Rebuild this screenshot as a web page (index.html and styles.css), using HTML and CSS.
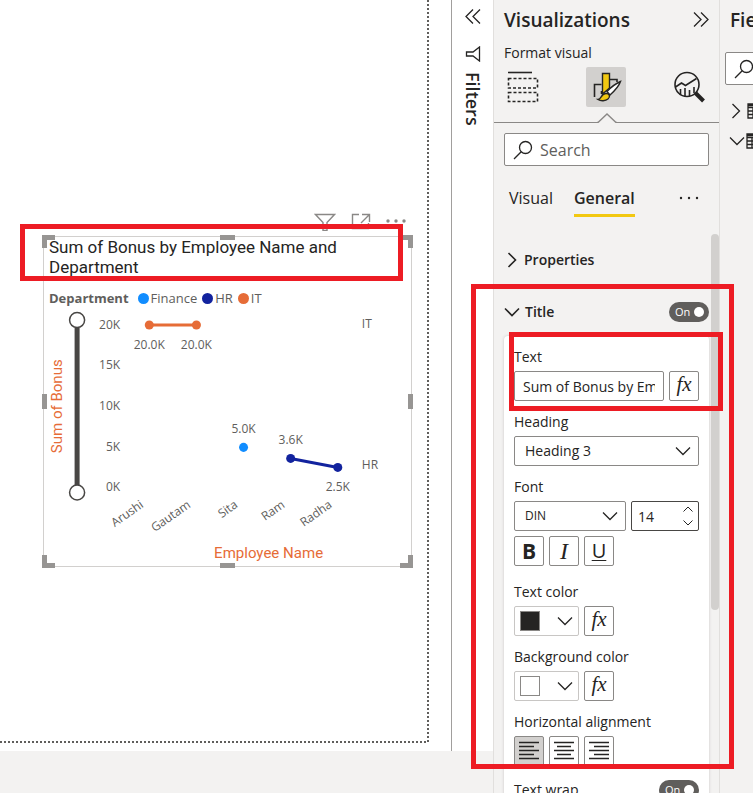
FILE: index.html
```html
<!DOCTYPE html>
<html lang="en">
<head>
<meta charset="utf-8">
<meta name="viewport" content="width=device-width, initial-scale=1">
<title>Report – Format visual</title>
<link rel="stylesheet" href="styles.css">
</head>
<body>
<svg class="defs" aria-hidden="true">
  <symbol id="chev-down" viewBox="0 0 16 10"><path d="M1 1.500 8 8.500 15 1.500"/></symbol>
  <symbol id="chev-right" viewBox="0 0 10 16"><path d="M1.500 1 8.500 8 1.500 15"/></symbol>
  <symbol id="search" viewBox="0 0 20 20"><circle cx="12.500" cy="7.500" r="6"/><path d="M8.200 11.800 1 19"/></symbol>
  <symbol id="grid" viewBox="0 0 18 16"><path d="M1 1h16v14H1zM1 4.500h16M1 8h16M1 11.500h16M6 4v11M12 4v11M1 2.500h16"/></symbol>
</svg>
<div class="app">
  <main class="report">
    <div class="page">
      <section class="visual" aria-label="Sum of Bonus by Employee Name and Department">
        <div class="visual-tools">
          <svg width="22" height="18" viewBox="0 0 22 18"><path d="M1.500 1.500h19l-7.500 8v8h-4v-8z"/></svg>
          <svg width="20" height="18" viewBox="0 0 20 18"><path d="M8 1.500H1.500v14h16V10M11 1.500h7.500V9M18.500 1.500 10 10"/></svg>
          <svg width="20" height="18" viewBox="0 0 20 18" class="dots"><circle cx="2" cy="8" r="1.700"/><circle cx="10" cy="8" r="1.700"/><circle cx="18" cy="8" r="1.700"/></svg>
        </div>
        <i class="handle nw"></i><i class="handle n"></i><i class="handle ne"></i>
        <i class="handle w"></i><i class="handle e"></i>
        <i class="handle sw"></i><i class="handle s"></i><i class="handle se"></i>
        <h3 class="visual-title">Sum of Bonus by Employee Name and Department</h3>
        <div class="legend">
          <b>Department</b>
          <span class="finance">Finance</span>
          <span class="hr">HR</span>
          <span class="it">IT</span>
        </div>
        <svg class="chart" viewBox="0 0 366 256">
          <path class="slider" d="M33 20V178"/>
          <circle class="knob" cx="33" cy="12" r="7.500"/><circle class="knob" cx="33" cy="184" r="7.500"/>
          <text class="axis-name" text-anchor="middle" transform="translate(18 98) rotate(-90)">Sum of Bonus</text>
          <g text-anchor="end">
            <text x="76" y="21">20K</text><text x="76" y="61">15K</text><text x="76" y="102">10K</text><text x="76" y="143">5K</text><text x="76" y="183">0K</text>
          </g>
          <g class="s-it"><path d="M105 17h47"/><circle cx="105" cy="17" r="4.500"/><circle cx="152" cy="17" r="4.500"/></g>
          <g class="s-fin"><circle cx="199" cy="139" r="4.500"/></g>
          <g class="s-hr"><path d="M246 150 293 159"/><circle cx="246" cy="150" r="4.500"/><circle cx="293" cy="159" r="4.500"/></g>
          <g text-anchor="middle">
            <text x="105" y="41">20.0K</text><text x="152" y="41">20.0K</text><text x="199" y="125">5.0K</text><text x="246" y="136">3.6K</text><text x="293" y="183">2.5K</text>
          </g>
          <text x="317" y="20">IT</text><text x="317" y="161">HR</text>
          <g text-anchor="end">
            <text transform="translate(100 198) rotate(-35)">Arushi</text>
            <text transform="translate(147 198) rotate(-35)">Gautam</text>
            <text transform="translate(194 198) rotate(-35)">Sita</text>
            <text transform="translate(241 198) rotate(-35)">Ram</text>
            <text transform="translate(288 198) rotate(-35)">Radha</text>
          </g>
          <text class="axis-name" x="224" y="249" text-anchor="middle">Employee Name</text>
        </svg>
        <span class="mark mark-title"></span>
      </section>
    </div>
  </main>

  <aside class="filters">
    <button class="plain" aria-label="Expand filters"><svg class="line" width="16" height="18" viewBox="0 0 16 18"><path d="M8 1.500 1 8.500l7 7M15 1.500 8 8.500l7 7"/></svg></button>
    <svg class="funnel line" width="16" height="16" viewBox="0 0 16 16"><path d="M14.500 1v14L8 10H1.500V6H8z"/></svg>
    <h2>Filters</h2>
  </aside>

  <aside class="viz">
    <header class="viz-head">
      <h2>Visualizations</h2>
      <button class="plain" aria-label="Collapse"><svg class="line" width="16" height="18" viewBox="0 0 16 18"><path d="M1 1.500 8 8.500l-7 7M8 1.500 15 8.500l-7 7"/></svg></button>
    </header>
    <p class="mode">Format visual</p>
    <div class="mode-tabs">
      <button class="plain" aria-label="Build visual"><svg width="32" height="32" viewBox="0 0 32 32"><path class="ink" d="M1 1.500h24"/><path class="ink dash" d="M1.500 7.500h29v9.500h-29zM1.500 21.500h29v9h-29z"/></svg></button>
      <button class="plain active" aria-label="Format visual"><svg width="32" height="32" viewBox="0 0 32 32"><path class="ink" d="M4.500 26V13.500h7M19 8.500h8v2.500M11.500 20v3"/><path class="gold" d="M12.500 2.500h7V17l-7 6z"/><path class="bristle" d="M17 20.500C21 16 25 13 30.500 10.500 29 15 25 19.500 20 24z"/><path class="gold" d="M8 28.500c3.500 0 3-6 8-6 4 0 4.500 3.500 2 5.500s-7 2.500-10 .5z"/></svg></button>
      <button class="plain" aria-label="Analytics"><svg width="32" height="32" viewBox="0 0 32 32"><circle class="ink" cx="14" cy="13.500" r="12"/><path class="ink" d="m2.500 16 6-4 4 2.500 11-7M7.500 24v-6M12 25v-8M16.500 25v-6M21 22v-6"/><path class="grip" d="m22.500 22 8 8"/></svg></button>
    </div>
    <div class="notch"><i></i><svg width="20" height="10" viewBox="0 0 20 10"><path d="M0 9.500h1L10 1l9 8.500h1"/></svg><i></i></div>
    <label class="search"><svg class="line" width="20" height="20"><use href="#search"/></svg><input type="search" placeholder="Search" aria-label="Search"></label>
    <nav class="tabs"><a href="#visual">Visual</a><a href="#general" class="on">General</a><button class="plain" aria-label="More options"><svg width="20" height="4" viewBox="0 0 20 4"><circle cx="2" cy="2" r="1.200"/><circle cx="10" cy="2" r="1.200"/><circle cx="18" cy="2" r="1.200"/></svg></button></nav>

    <div class="scroller">
      <button class="plain section"><svg class="line" width="10" height="16"><use href="#chev-right"/></svg>Properties</button>
      <div class="section-row">
        <button class="plain section"><svg class="line" width="16" height="10"><use href="#chev-down"/></svg>Title</button>
        <label class="toggle"><input type="checkbox" checked aria-label="Title"><span>On</span></label>
      </div>
      <form class="card">
        <label for="t-text">Text</label>
        <div class="row"><input class="box grow" id="t-text" type="text" value="Sum of Bonus by Employee Name and Department"><button type="button" class="box sq fx" aria-label="Conditional text">fx</button></div>
        <label for="t-head">Heading</label>
        <div class="row"><span class="pick grow"><select class="box" id="t-head"><option>Heading 3</option></select><svg class="line" width="16" height="10"><use href="#chev-down"/></svg></span></div>
        <label for="t-font">Font</label>
        <div class="row"><span class="pick grow"><select class="box small" id="t-font"><option>DIN</option></select><svg class="line" width="16" height="10"><use href="#chev-down"/></svg></span>
          <span class="spin"><input class="box" type="number" value="14" aria-label="Font size"><svg class="line" width="10" height="20" viewBox="0 0 10 20"><path d="M.5 5.500 5 1l4.500 4.500M.5 14.500 5 19l4.500-4.500"/></svg></span></div>
        <div class="row styles"><button type="button" class="box sq bold">B</button><button type="button" class="box sq ital">I</button><button type="button" class="box sq under">U</button></div>
        <label for="t-color">Text color</label>
        <div class="row"><button type="button" class="box color" id="t-color"><i class="dark"></i><svg class="line" width="16" height="10"><use href="#chev-down"/></svg></button><button type="button" class="box sq fx" aria-label="Conditional text color">fx</button></div>
        <label for="t-back">Background color</label>
        <div class="row"><button type="button" class="box color" id="t-back"><i></i><svg class="line" width="16" height="10"><use href="#chev-down"/></svg></button><button type="button" class="box sq fx" aria-label="Conditional background">fx</button></div>
        <label for="t-left">Horizontal alignment</label>
        <div class="row">
          <button type="button" class="box sq pressed" id="t-left" aria-label="Left"><svg class="line" width="20" height="20" viewBox="0 0 20 20"><path d="M0 1.500h20M0 5.500h15M0 9.500h20M0 13.500h15M0 17.500h20"/></svg></button>
          <button type="button" class="box sq" aria-label="Center"><svg class="line" width="20" height="20" viewBox="0 0 20 20"><path d="M0 1.500h20M3 5.500h14M0 9.500h20M3 13.500h14M0 17.500h20"/></svg></button>
          <button type="button" class="box sq" aria-label="Right"><svg class="line" width="20" height="20" viewBox="0 0 20 20"><path d="M0 1.500h20M5 5.500h15M0 9.500h20M5 13.500h15M0 17.500h20"/></svg></button>
        </div>
        <div class="row wrap"><span>Text wrap</span><label class="toggle"><input type="checkbox" checked aria-label="Text wrap"><span>On</span></label></div>
        <span class="mark mark-text"></span>
      </form>
      <span class="thumb"></span>
      <span class="mark mark-section"></span>
    </div>
  </aside>

  <aside class="fields">
    <h2>Fields</h2>
    <label class="search"><svg class="line" width="20" height="20"><use href="#search"/></svg><input type="search" aria-label="Search fields"></label>
    <div class="table-row"><svg class="line" width="10" height="16"><use href="#chev-right"/></svg><svg class="line" width="18" height="16"><use href="#grid"/></svg></div>
    <div class="table-row open"><svg class="line" width="16" height="10"><use href="#chev-down"/></svg><svg class="line" width="18" height="16"><use href="#grid"/></svg></div>
  </aside>
</div>
</body>
</html>
```
FILE: styles.css
```css
* { box-sizing: border-box; }
body {
  margin: 0;
  overflow: hidden;
  background: #f3f2f1;
  color: #252423;
  font: 14px/20px "Open Sans", "Noto Sans", sans-serif;
}
h2, h3, p { margin: 0; }
h2 { font-size: 18px; line-height: 24px; font-weight: 600; }
svg { display: block; fill: none; flex: none; }
.defs { position: absolute; width: 0; height: 0; }
.line { stroke: #252423; stroke-width: 1.3; }
.ink { stroke: #252423; stroke-width: 1.6; }
.dash { stroke-dasharray: 3 2; }
.gold { fill: #f2c811; stroke: #252423; stroke-width: 1.4; }
.bristle { fill: #fff; stroke: #252423; stroke-width: 1.4; }
.grip { stroke: #252423; stroke-width: 4; }
.plain { padding: 0; border: 0; background: none; color: inherit; font: inherit; }
.mark { position: absolute; border: 5px solid #ed1c24; pointer-events: none; z-index: 5; }

.app {
  display: grid;
  grid-template-columns: minmax(0, 1fr) 42px 227px 33px;
  grid-template-rows: minmax(0, 1fr);
  height: 100vh;
  overflow: hidden;
}

/* Report canvas */
.report { margin-bottom: 42px; padding: 0 22px 8px 0; background: #fff; }
.page {
  height: 100%;
  padding: 236px 17px 0 43px;
  background:
    repeating-linear-gradient(#605e5c 0 2px, #fff 2px 4px) right / 2px 100% no-repeat,
    repeating-linear-gradient(90deg, #605e5c 0 2px, #fff 2px 4px) bottom / 100% 2px no-repeat;
}
.visual { position: relative; height: 331px; padding: 0 0 0 5px; border: 1px solid #d2d0ce; }
.visual-tools { position: absolute; right: 5px; top: -24px; display: flex; gap: 15px; stroke: #8a8886; stroke-width: 1.4; }
.dots { fill: #8a8886; stroke: none; }
.visual-title { padding-right: 50px; font: 400 17px/20px Roboto, sans-serif; }
.legend { display: flex; margin-top: 11px; color: #605e5c; font-size: 13px; }
.legend b { margin-right: 9px; }
.legend span { display: flex; align-items: center; gap: 2px; margin-right: 5px; }
.legend span::before { content: ""; width: 11px; height: 11px; border-radius: 50%; background: #118dff; }
.legend .hr::before { background: #12239e; }
.legend .it::before { background: #e66c37; }
.chart { width: calc(100% + 5px); margin-left: -5px; }
.chart text { fill: #605e5c; font-size: 12px; }
.chart .axis-name { fill: #e66c37; font: 15px Roboto, sans-serif; }
.slider { stroke: #484644; stroke-width: 5; }
.knob { fill: #fff; stroke: #484644; stroke-width: 1.5; }
.s-it { fill: #e66c37; stroke: #e66c37; }
.s-fin { fill: #118dff; }
.s-hr { fill: #12239e; stroke: #12239e; }
.chart g path { stroke-width: 3; }
.chart g circle { stroke: none; }
.handle { position: absolute; width: 13px; height: 13px; border: 0 solid #979593; z-index: 1; }
.nw, .ne { top: -2px; border-top-width: 5px; }
.sw, .se { bottom: -2px; border-bottom-width: 5px; }
.nw, .sw { left: -2px; border-left-width: 5px; }
.ne, .se { right: -2px; border-right-width: 5px; }
.n, .s { left: calc(50% - 8px); width: 15px; height: 5px; background: #979593; }
.n { top: -2px; }
.s { bottom: -2px; }
.w, .e { top: calc(50% - 8px); width: 5px; height: 15px; background: #979593; }
.w { left: -2px; }
.e { right: -2px; }
.mark-title { left: -24px; right: 8px; top: -13px; height: 57px; }

/* Collapsed filter pane */
.filters {
  display: flex; flex-direction: column; align-items: center;
  margin-bottom: 42px; padding-top: 8px;
  border-left: 1px solid #a19f9d; background: #fff;
}
.funnel { margin: 20px 0 10px; }
.filters h2 { writing-mode: vertical-rl; }

/* Format pane */
.viz { display: flex; flex-direction: column; min-height: 0; padding-top: 8px; border: solid #e1dfdd; border-width: 0 1px; }
.viz-head { display: flex; justify-content: space-between; align-items: center; padding: 0 10px; }
.viz-head h2, .fields h2 { font-size: 19px; }
.mode { margin: 11px 10px 4px; font-weight: 500; }
.mode-tabs { display: flex; justify-content: space-between; padding: 0 10px 0 9px; }
.mode-tabs button { display: grid; place-items: center; width: 40px; height: 40px; border-radius: 2px; }
.mode-tabs .active { background: #d2d0ce; }
.notch { display: flex; align-items: flex-end; margin-top: 6px; }
.notch i { flex: 1; border-bottom: 1px solid #8a8886; }
.notch path { stroke: #8a8886; stroke-width: 1.4; }
.search { display: flex; align-items: center; gap: 7px; height: 33px; margin: 10px 10px 0; padding: 0 8px; border: 1px solid #8a8886; border-radius: 2px; background: #fff; }
.search input { flex: 1; min-width: 0; padding: 0; border: 0; outline: 0; background: none; font: 16px/24px "Open Sans", sans-serif; }
.search input::placeholder { color: #605e5c; opacity: 1; }
.tabs { display: flex; gap: 21px; margin: 20px 20px 0 15px; font-size: 16px; line-height: 24px; }
.tabs a { padding-bottom: 4px; color: inherit; text-decoration: none; }
.tabs .on { border-bottom: 3px solid #f2c811; font-weight: 600; }
.tabs button { height: 24px; margin-left: auto; }
.tabs svg { fill: #252423; }
.scroller { position: relative; flex: 1; min-height: 0; padding: 33px 10px 0; }
.section { display: flex; align-items: center; gap: 5px; font-weight: 600; }
.section svg { stroke-width: 1.6; }
.scroller > .section { padding-left: 3px; gap: 7px; }
.section-row { display: flex; justify-content: space-between; margin: 32px 0 14px; }
.toggle { position: relative; display: block; width: 40px; height: 20px; border-radius: 10px; background: #605e5c; color: #fff; font-size: 11px; }
.toggle input { position: absolute; right: 5px; top: 5px; width: 10px; height: 10px; margin: 0; appearance: none; border-radius: 50%; background: #fff; }
.toggle span { padding-left: 6px; }
.card { position: relative; padding: 11px 10px 10px; border-radius: 4px 4px 0 0; background: #fff; box-shadow: 0 0 3px #c8c6c4; }
.card > label { display: block; margin-bottom: 4px; }
.row { display: flex; gap: 5px; margin-bottom: 11px; }
.grow { flex: 1; min-width: 0; }
.box { height: 30px; padding: 0 8px; border: 1px solid #8a8886; border-radius: 2px; background: #fff; color: #252423; font: inherit; }
.sq { display: grid; place-items: center; width: 30px; padding: 0; }
.fx { font: italic 21px/24px "Liberation Serif", serif; padding-bottom: 4px; }
.pick, .spin { position: relative; }
.pick select { width: 100%; appearance: none; padding-left: 10px; }
.pick svg { position: absolute; right: 8px; top: 10px; pointer-events: none; }
.box.small { font-size: 12px; }
.spin { width: 68px; }
.spin input { width: 100%; appearance: textfield; padding: 0 6px; border-color: #484644; }
.spin input::-webkit-inner-spin-button { display: none; }
.spin svg { position: absolute; right: 6px; top: 5px; stroke-width: 1; pointer-events: none; }
.styles { margin: -6px 0 16px; font-size: 20px; }
.styles .bold { font-weight: 700; font-size: 21px; }
.styles .ital { font-family: "Liberation Serif", serif; font-style: italic; font-size: 24px; }
.styles .under { text-decoration: underline; text-decoration-thickness: 1px; text-underline-offset: 2px; }
.color { display: flex; align-items: center; justify-content: space-between; width: 65px; padding: 0 5px; border-color: #c8c6c4; }
.color i { width: 20px; height: 20px; border: 1px solid #8a8886; }
.color .dark { background: #252423; }
.pressed { background: #d2d0ce; }
.wrap { justify-content: space-between; margin-top: 14px; }
.thumb { position: absolute; right: 0; top: 17px; width: 8px; height: 376px; border-radius: 4px; background: #d2d0ce; }
.mark-text { left: 5px; right: -14px; top: -4px; height: 79px; }
.mark-section { left: -23px; right: -15px; top: 67px; height: 485px; }

/* Fields pane, cut off by the window edge */
.fields { overflow: hidden; padding-top: 8px; white-space: nowrap; }
.fields h2 { margin-left: 10px; }
.fields .search { width: 200px; margin: 20px 5px 16px; }
.table-row { display: flex; align-items: center; gap: 6px; height: 20px; margin: 0 0 10px 11px; }
.table-row.open { gap: 1px; margin-left: 9px; }
```
